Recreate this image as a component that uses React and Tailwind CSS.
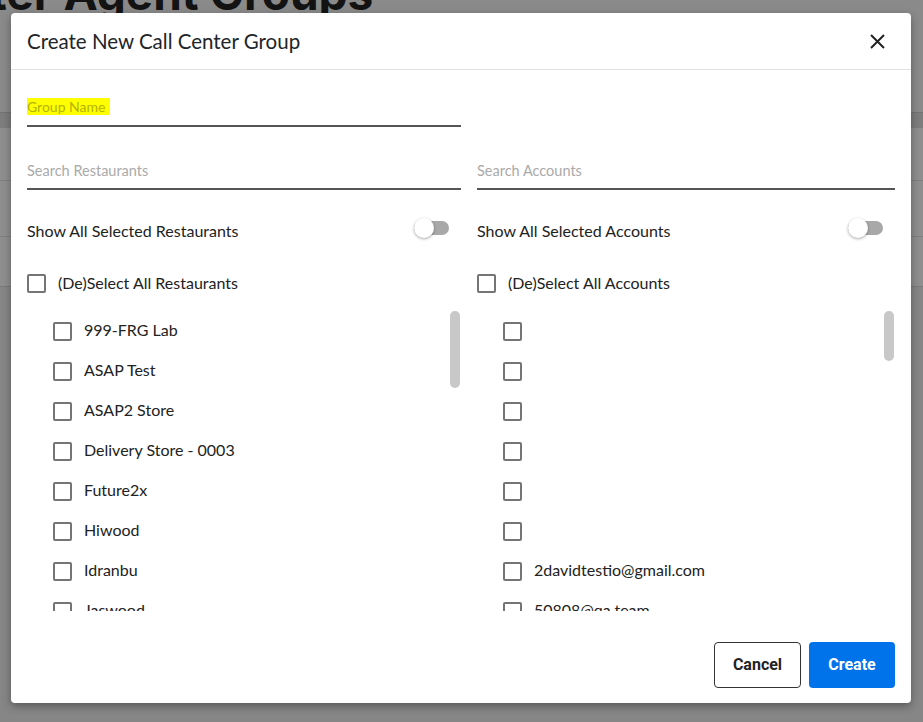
const RESTAURANTS = [
  '999-FRG Lab',
  'ASAP Test',
  'ASAP2 Store',
  'Delivery Store - 0003',
  'Future2x',
  'Hiwood',
  'Idranbu',
  'Jaswood'
];

const ACCOUNTS = ['', '', '', '', '', '', '2davidtestio@gmail.com', '50808@qa.team'];

function Checkbox() {
  return <span className="w-[19px] h-[19px] shrink-0 border-2 border-[#757575] rounded-[2px] bg-white" />;
}

function Toggle() {
  return (
    <div className="relative w-[35px] h-[20px] mt-[-8px] mr-[12px] flex items-center">
      <div className="w-full h-[14px] rounded-full bg-[#a8a8a8]" />
      <div className="absolute left-0 top-0 w-[20px] h-[20px] rounded-full bg-white shadow-[0_1px_3px_rgba(0,0,0,0.35)]" />
    </div>
  );
}

function CheckList({ items, thumb }) {
  return (
    <div className="mt-[18px] h-[300px] overflow-hidden flex">
      <div className="flex-1 pl-[26px]">
        {items.map((label, i) => (
          <div key={i} className="h-[40px] flex items-center gap-3 text-[16px] text-[#222]">
            <Checkbox />
            <span className="mb-[2px]">{label}</span>
          </div>
        ))}
      </div>
      <div className="w-[10px] mr-[1px]">
        <div className={`w-full rounded-full bg-[#c8c8c8] ${thumb}`} />
      </div>
    </div>
  );
}

export default function App() {
  return (
    <div className="relative w-[923px] h-[722px] overflow-hidden bg-[#868686] font-['Lato',sans-serif]">
      {/* page behind the overlay */}
      <div className="h-[112px] bg-[#8a8a8a] overflow-hidden">
        <div className="mt-[-30px] ml-[-10px] whitespace-nowrap text-[46px] leading-[46px] font-bold text-[#131313] font-['Inter',sans-serif]">
          ter Agent Groups
        </div>
      </div>
      <div className="h-[16px] bg-[#7d7d7d] border-t border-[#747474]" />
      <div className="h-[53px] bg-[#8e8e8e] border-b border-[#808080]" />
      <div className="h-[56px] bg-[#8e8e8e] border-b border-[#808080]" />
      <div className="h-[50px] bg-[#8e8e8e] border-b border-[#7a7a7a]" />

      {/* modal */}
      <div className="absolute left-[11px] top-[13px] w-[900px] h-[690px] bg-white rounded-[4px] shadow-[0_3px_8px_rgba(0,0,0,0.35)] flex flex-col">
        <div className="h-[57px] px-4 flex items-center justify-between border-b border-[#dee2e6]">
          <h2 className="text-[20.5px] text-[#212529]">Create New Call Center Group</h2>
          <svg className="w-[15px] h-[15px] mr-[10px]" viewBox="0 0 15 15">
            <path d="M1 1L14 14M14 1L1 14" stroke="#222" strokeWidth="2" />
          </svg>
        </div>

        <div className="px-4 flex flex-col">
          <div className="grid grid-cols-[434px_418px] gap-x-4">
            <div className="mt-[28px] pb-[10px] border-b-2 border-[#555] leading-[16px]">
              <span className="text-[14px] bg-[#ffff00] text-[#b3b300] pr-[5px]">Group Name</span>
            </div>
            <div />
          </div>

          <div className="grid grid-cols-[434px_418px] gap-x-4">
            <div className="mt-[36px] pb-[9px] border-b-2 border-[#555] leading-[16px] text-[14.5px] text-[#aaa]">
              Search Restaurants
            </div>
            <div className="mt-[36px] pb-[9px] border-b-2 border-[#555] leading-[16px] text-[14.5px] text-[#aaa]">
              Search Accounts
            </div>
          </div>

          <div className="grid grid-cols-[434px_418px] gap-x-4">
            <div className="mt-[32px] h-[20px] flex items-center justify-between text-[16px] text-[#222]">
              <span className="mb-[2px]">Show All Selected Restaurants</span>
              <Toggle />
            </div>
            <div className="mt-[32px] h-[20px] flex items-center justify-between text-[16px] text-[#222]">
              <span className="mb-[2px]">Show All Selected Accounts</span>
              <Toggle />
            </div>
          </div>

          <div className="grid grid-cols-[434px_418px] gap-x-4">
            <div className="mt-[32px] h-[19px] flex items-center gap-3 text-[16px] text-[#222]">
              <Checkbox />
              <span className="mb-[2px]">(De)Select All Restaurants</span>
            </div>
            <div className="mt-[32px] h-[19px] flex items-center gap-3 text-[16px] text-[#222]">
              <Checkbox />
              <span className="mb-[2px]">(De)Select All Accounts</span>
            </div>
          </div>

          <div className="grid grid-cols-[434px_418px] gap-x-4">
            <CheckList items={RESTAURANTS} thumb="h-[77px]" />
            <CheckList items={ACCOUNTS} thumb="h-[50px]" />
          </div>
        </div>

        <div className="mt-auto px-4 pb-[15px] flex justify-end gap-2 font-['Roboto',sans-serif]">
          <button className="w-[87px] h-[46px] border border-[#333] rounded-[4px] bg-white text-[16px] font-bold text-[#222]">
            Cancel
          </button>
          <button className="w-[86px] h-[46px] rounded-[4px] bg-[#0073ea] text-[16px] font-bold text-white">
            Create
          </button>
        </div>
      </div>
    </div>
  );
}
